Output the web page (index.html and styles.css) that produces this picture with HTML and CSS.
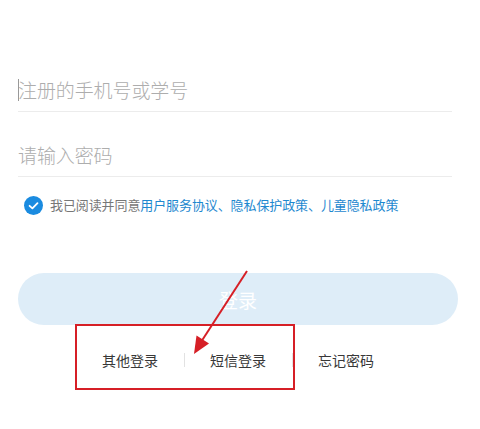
FILE: index.html
```html
<!DOCTYPE html>
<html lang="zh-CN">
<head>
  <meta charset="UTF-8">
  <meta name="viewport" content="width=device-width, initial-scale=1.0">
  <title>登录</title>
  <link rel="stylesheet" href="styles.css">
</head>
<body>

  <div class="login">
    <div class="field">
      <span class="caret"></span>
      <span class="placeholder">注册的手机号或学号</span>
    </div>

    <div class="field">
      <span class="placeholder">请输入密码</span>
    </div>

    <div class="agree">
      <span class="check">
        <svg width="19" height="19" viewBox="0 0 19 19">
          <circle cx="9.5" cy="9.5" r="9.5" fill="#1a8be0"/>
          <path d="M5.6 9.8 L8.4 12.4 L13.5 7.2" fill="none" stroke="#fff" stroke-width="1.8" stroke-linecap="round" stroke-linejoin="round"/>
        </svg>
      </span>
      <span class="agree-text">我已阅读并同意<span class="link">用户服务协议、隐私保护政策、儿童隐私政策</span></span>
    </div>

    <button class="submit">登录</button>

    <div class="more">
      <span class="more-item">其他登录</span>
      <span class="more-item">短信登录</span>
      <span class="more-item">忘记密码</span>
    </div>
  </div>

  <!-- annotation drawn over the screenshot -->
  <div class="mark-box"></div>
  <svg class="mark-arrow" width="480" height="429" viewBox="0 0 480 429">
    <line x1="247" y1="271" x2="201" y2="342" stroke="#d61f26" stroke-width="2"/>
    <polygon points="194,354 196.5,335.5 209,343.5" fill="#d61f26"/>
  </svg>

</body>
</html>
```

FILE: styles.css
```css
body {
  margin: 0;
  background-color: #fff;
  font-family: "Noto Sans CJK SC", "Noto Sans", sans-serif;
  color: #333;
  width: 480px;
  height: 429px;
  overflow: hidden;
  position: relative;
}

.login {
  padding: 47px 22px 0 18px;
}

.field {
  display: flex;
  align-items: center;
  height: 26px;
  padding: 30px 0 8px;
  margin-right: 6px;
  border-bottom: 1px solid #ececec;
  position: relative;
}

.caret {
  position: absolute;
  left: 0;
  top: 32px;
  width: 1px;
  height: 22px;
  background-color: #999;
}

.placeholder {
  font-size: 19px;
  line-height: 26px;
  color: #adadad;
  font-weight: 300;
  letter-spacing: -0.1px;
}

.agree {
  display: flex;
  align-items: center;
  height: 20px;
  margin-top: 18px;
  padding-left: 6px;
}

.check {
  display: flex;
  width: 19px;
  height: 19px;
  margin-right: 7px;
}

.agree-text {
  font-size: 13px;
  line-height: 20px;
  color: #777;
  letter-spacing: -0.1px;
}

.agree-text .link {
  color: #1e88cf;
}

.submit {
  display: block;
  width: 100%;
  height: 52px;
  margin-top: 58px;
  border: none;
  border-radius: 26px;
  background-color: #deedf8;
  color: #fff;
  font-family: inherit;
  font-size: 19px;
  padding: 0;
}

.more {
  display: flex;
  justify-content: center;
  align-items: center;
  height: 70px;
}

.more-item {
  width: 108px;
  text-align: center;
  font-size: 14px;
  line-height: 20px;
  color: #383838;
  position: relative;
}

.more-item + .more-item::before {
  content: "";
  position: absolute;
  left: 0;
  top: 3px;
  width: 1px;
  height: 14px;
  background-color: #e2e2e2;
}

.mark-box {
  position: absolute;
  left: 75px;
  top: 324px;
  width: 216px;
  height: 62px;
  border: 2px solid #d61f26;
}

.mark-arrow {
  position: absolute;
  left: 0;
  top: 0;
  pointer-events: none;
}
```
